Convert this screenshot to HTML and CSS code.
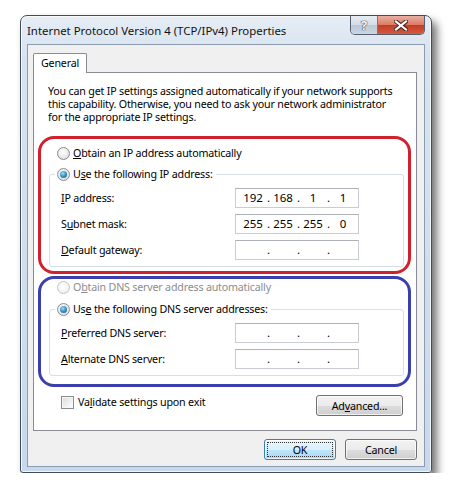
FILE: index.html
```html
<!DOCTYPE html>
<html lang="en">
<head>
  <meta charset="UTF-8" />
  <title>Internet Protocol Version 4 (TCP/IPv4) Properties</title>
  <link rel="stylesheet" href="styles.css">
</head>
<body>

  <div class="window">
    <div class="titlebar">
      <span class="title">Internet Protocol Version 4 (TCP/IPv4) Properties</span>
      <div class="caption">
        <span class="cap cap-help">?</span>
        <span class="cap cap-close">
          <svg width="14" height="11" viewBox="0 0 14 11">
            <path d="M2 1.5 L12 9.5 M12 1.5 L2 9.5" stroke="#4b231c" stroke-width="4.2" stroke-linecap="square"/>
            <path d="M2 1.5 L12 9.5 M12 1.5 L2 9.5" stroke="#ffffff" stroke-width="2.2" stroke-linecap="square"/>
          </svg>
        </span>
      </div>
    </div>

    <div class="client">
      <div class="tabs"><span class="tab">General</span></div>

      <div class="panel">
        <p class="intro">You can get IP settings assigned automatically if your network supports<br>
          this capability. Otherwise, you need to ask your network administrator<br>
          for the appropriate IP settings.</p>

        <div class="mark mark-red">
          <div class="opt"><span class="radio"></span><span><u>O</u>btain an IP address automatically</span></div>
          <fieldset class="group">
            <legend><span class="opt"><span class="radio on"></span><span>U<u>s</u>e the following IP address:</span></span></legend>
            <div class="fields">
              <span class="lbl"><u>I</u>P address:</span>
              <div class="ipbox"><span class="oct">192</span><span class="dot">.</span><span class="oct">168</span><span class="dot">.</span><span class="oct">1</span><span class="dot">.</span><span class="oct">1</span></div>
              <span class="lbl">S<u>u</u>bnet mask:</span>
              <div class="ipbox"><span class="oct">255</span><span class="dot">.</span><span class="oct">255</span><span class="dot">.</span><span class="oct">255</span><span class="dot">.</span><span class="oct">0</span></div>
              <span class="lbl"><u>D</u>efault gateway:</span>
              <div class="ipbox"><span class="oct"></span><span class="dot">.</span><span class="oct"></span><span class="dot">.</span><span class="oct"></span><span class="dot">.</span><span class="oct"></span></div>
            </div>
          </fieldset>
        </div>

        <div class="mark mark-blue">
          <div class="opt disabled"><span class="radio"></span><span>O<u>b</u>tain DNS server address automatically</span></div>
          <fieldset class="group">
            <legend><span class="opt"><span class="radio on"></span><span>Us<u>e</u> the following DNS server addresses:</span></span></legend>
            <div class="fields">
              <span class="lbl"><u>P</u>referred DNS server:</span>
              <div class="ipbox"><span class="oct"></span><span class="dot">.</span><span class="oct"></span><span class="dot">.</span><span class="oct"></span><span class="dot">.</span><span class="oct"></span></div>
              <span class="lbl"><u>A</u>lternate DNS server:</span>
              <div class="ipbox"><span class="oct"></span><span class="dot">.</span><span class="oct"></span><span class="dot">.</span><span class="oct"></span><span class="dot">.</span><span class="oct"></span></div>
            </div>
          </fieldset>
        </div>

        <div class="bottom-row">
          <div class="opt check-row"><span class="checkbox"></span><span>Va<u>l</u>idate settings upon exit</span></div>
          <button class="btn btn-wide">Ad<u>v</u>anced...</button>
        </div>
      </div>

      <div class="actions">
        <button class="btn btn-default">OK</button>
        <button class="btn">Cancel</button>
      </div>
    </div>
  </div>

</body>
</html>
```

FILE: styles.css
```css
body {
  margin: 0;
  background: #ffffff;
  font-family: "Noto Sans", "Open Sans", sans-serif;
  font-size: 10.7px;
  letter-spacing: -0.2px;
  color: #000;
}

.window {
  box-sizing: border-box;
  width: 412px;
  height: 458px;
  margin: 15px 0 0 20px;
  padding: 0 6px 6px 6px;
  border: 1px solid #434d5a;
  border-radius: 7px 7px 3px 3px;
  background: linear-gradient(to bottom, #e6edf5 0%, #d7e3f0 40px, #c8d9ed 100%);
  box-shadow: inset 0 0 0 1px rgba(255, 255, 255, 0.75), 5px 6px 9px rgba(0, 0, 0, 0.55);
}

.titlebar {
  height: 28px;
  display: flex;
  justify-content: space-between;
  align-items: flex-start;
}

.title {
  padding-top: 7px;
  line-height: 15px;
  font-size: 11.4px;
  letter-spacing: 0;
  color: #111;
}

.caption {
  display: flex;
  height: 18px;
  border: 1px solid #56606c;
  border-top: none;
  border-radius: 0 0 5px 5px;
  overflow: hidden;
}

.cap {
  display: flex;
  align-items: center;
  justify-content: center;
}

.cap-help {
  width: 26px;
  border-right: 1px solid #6e7a88;
  background: linear-gradient(to bottom, #e6ecf3 0%, #d3dce7 50%, #bcc8d6 51%, #cad6e4 100%);
  color: #f4f6f8;
  font-size: 13px;
  font-weight: bold;
  text-shadow: 0 0 1px #3a4452, 0 0 1px #3a4452, 0 0 1px #3a4452;
}

.cap-close {
  width: 46px;
  background: linear-gradient(to bottom, #eab0a2 0%, #dc7c66 48%, #c43c25 52%, #d55a3f 100%);
}

.client {
  box-sizing: border-box;
  height: 423px;
  padding: 8px 7px 0 5px;
  border: 1px solid #8b9bb0;
  background: #f0f0f0;
}

.tabs {
  display: flex;
}

.tab {
  position: relative;
  z-index: 1;
  box-sizing: border-box;
  width: 54px;
  height: 20px;
  margin-bottom: -1px;
  padding-left: 7px;
  line-height: 18px;
  border: 1px solid #898c95;
  border-bottom: none;
  border-radius: 2px 2px 0 0;
  background: #ffffff;
}

.panel {
  box-sizing: border-box;
  width: 384px;
  height: 359px;
  padding: 12px 5px 0 4px;
  border: 1px solid #898c95;
  background: #ffffff;
}

.intro {
  margin: 0 0 12px 10px;
  line-height: 13px;
  white-space: nowrap;
}

.mark {
  border: 3px solid;
  border-radius: 16px;
}

.mark-red {
  border-color: #d2202c;
  padding: 6px 4px 4px 8px;
}

.mark-blue {
  margin-top: 2px;
  border-color: #3b3fae;
  padding: 0 4px 8px 8px;
}

.opt {
  display: flex;
  align-items: center;
  gap: 3px;
  line-height: 16px;
  padding-left: 8px;
  white-space: nowrap;
}

.opt.disabled {
  color: #8d8d8d;
}

legend .opt {
  padding-left: 0;
}

.radio {
  position: relative;
  box-sizing: border-box;
  width: 13px;
  height: 13px;
  border: 1px solid #8b8d90;
  border-radius: 50%;
  background: radial-gradient(circle at 45% 40%, #ffffff 0%, #eeeeee 45%, #cfcfcf 100%);
}

.disabled .radio {
  border-color: #c4c5c7;
  background: radial-gradient(circle at 45% 40%, #ffffff 0%, #f2f2f2 60%, #e2e2e2 100%);
}

.radio.on::after {
  content: "";
  position: absolute;
  left: 2px;
  top: 2px;
  width: 7px;
  height: 7px;
  border-radius: 50%;
  background: radial-gradient(circle at 40% 35%, #a4e0f8 0%, #3e98c9 45%, #15507d 100%);
}

.group {
  margin: 5px 0 0 0;
  padding: 0 5px 6px 5px;
  border: 1px solid #d5dfe5;
  border-radius: 3px;
}

.mark-blue .group {
  margin-top: 6px;
}

.group legend {
  padding: 0 3px 0 2px;
}

.fields {
  display: grid;
  grid-template-columns: 174px 124px;
  row-gap: 6px;
  align-items: center;
  padding: 6px 0 0 6px;
}

.ipbox {
  box-sizing: border-box;
  display: flex;
  width: 124px;
  height: 20px;
  padding-left: 3px;
  border: 1px solid #c9ccd2;
  border-top-color: #aeb1b8;
  line-height: 18px;
  font-size: 11.5px;
  letter-spacing: 0;
}

.oct {
  width: 28px;
  text-align: center;
}

.dot {
  width: 2px;
  text-align: center;
}

.bottom-row {
  display: flex;
  justify-content: space-between;
  align-items: flex-start;
  margin: 8px 8px 0 15px;
}

.check-row {
  margin-top: -1px;
  gap: 4px;
}

.checkbox {
  box-sizing: border-box;
  width: 13px;
  height: 13px;
  border: 1px solid #8b8d90;
  background: linear-gradient(135deg, #dcdcdc 0%, #f4f4f4 70%, #ffffff 100%);
  box-shadow: inset 0 0 0 1px #f6f6f6;
}

.btn {
  position: relative;
  box-sizing: border-box;
  width: 72px;
  height: 21px;
  padding: 0;
  border: 1px solid #707070;
  border-radius: 3px;
  background: linear-gradient(to bottom, #f2f2f2 0%, #ebebeb 50%, #dddddd 51%, #cfcfcf 100%);
  box-shadow: inset 0 0 0 1px rgba(255, 255, 255, 0.7);
  font: inherit;
  letter-spacing: inherit;
  color: #000;
}

.btn-wide {
  width: 87px;
}

.btn-default {
  border-color: #3c7fb1;
  background: linear-gradient(to bottom, #eaf6fd 0%, #d9f0fc 50%, #bee6fd 51%, #a7d9f5 100%);
}

.btn-default::after {
  content: "";
  position: absolute;
  inset: 2px;
  border: 1px dotted #333;
}

.actions {
  display: flex;
  justify-content: flex-end;
  gap: 9px;
  margin-top: 8px;
}
```
